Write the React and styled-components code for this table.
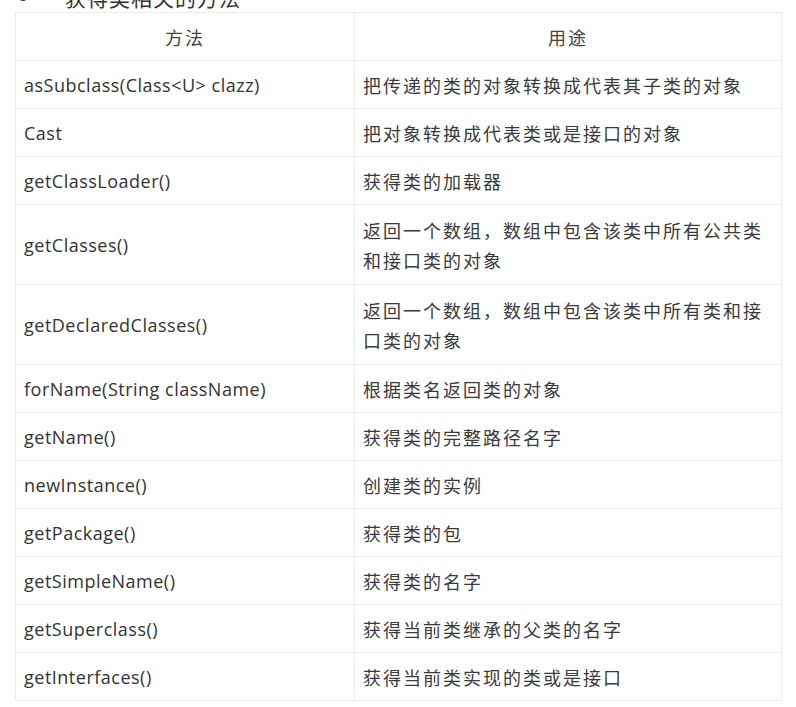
import React from 'react'
import styled, { createGlobalStyle } from 'styled-components'

const rows = [
  ['asSubclass(Class<U> clazz)', '把传递的类的对象转换成代表其子类的对象'],
  ['Cast', '把对象转换成代表类或是接口的对象'],
  ['getClassLoader()', '获得类的加载器'],
  ['getClasses()', '返回一个数组，数组中包含该类中所有公共类和接口类的对象', true],
  ['getDeclaredClasses()', '返回一个数组，数组中包含该类中所有类和接口类的对象', true],
  ['forName(String className)', '根据类名返回类的对象'],
  ['getName()', '获得类的完整路径名字'],
  ['newInstance()', '创建类的实例'],
  ['getPackage()', '获得类的包'],
  ['getSimpleName()', '获得类的名字'],
  ['getSuperclass()', '获得当前类继承的父类的名字'],
  ['getInterfaces()', '获得当前类实现的类或是接口'],
]

function App() {
  return (
    <>
      <GlobalStyle />
      <Page>
        <Heading>
          <Bullet />
          <span>获得类相关的方法</span>
        </Heading>
        <Table>
          <colgroup>
            <Col width={339} />
            <Col width={427} />
          </colgroup>
          <thead>
            <tr>
              <HeadCell>方法</HeadCell>
              <HeadCell>用途</HeadCell>
            </tr>
          </thead>
          <tbody>
            {rows.map(([method, use, tall]) => (
              <tr key={method}>
                <MethodCell tall={tall}>{method}</MethodCell>
                <UseCell tall={tall}>{use}</UseCell>
              </tr>
            ))}
          </tbody>
        </Table>
      </Page>
    </>
  )
}

const GlobalStyle = createGlobalStyle`
  body {
    margin: 0;
    background: #fff;
    overflow: hidden;
  }
`

const Page = styled.div`
  padding: 0 15px;
  font-family: "Open Sans", "Noto Sans CJK SC", sans-serif;
  color: #333;
`

const Heading = styled.div`
  display: flex;
  align-items: center;
  height: 30px;
  margin-top: -18px;
  font: 21px "Noto Sans CJK SC", sans-serif;
  letter-spacing: 1px;
  color: #333;

  span {
    margin-left: 38px;
  }
`

const Bullet = styled.i`
  width: 8px;
  height: 8px;
  margin-left: 4px;
  border-radius: 50%;
  background: #333;
`

const Table = styled.table`
  width: 766px;
  border-collapse: collapse;
  table-layout: fixed;
`

const Col = styled.col`
  width: ${p => p.width}px;
`

const Cell = styled.td`
  border: 1px solid #ebebeb;
  padding: ${p => (p.tall ? '9.5px 8px' : '8.5px 8px')};
  line-height: 30px;
  vertical-align: middle;
`

const HeadCell = styled(Cell).attrs({ as: 'th' })`
  font: 18px "Noto Sans CJK SC", sans-serif;
  line-height: 30px;
  font-weight: 400;
  letter-spacing: 2px;
  text-align: center;
  color: #444;
`

const MethodCell = styled(Cell)`
  font-size: 18px;
  letter-spacing: 0.5px;
  color: #333;
`

const UseCell = styled(Cell)`
  font: 18px "Noto Sans CJK SC", sans-serif;
  line-height: 30px;
  letter-spacing: 2px;
  color: #3a3a3a;
`

export default App
